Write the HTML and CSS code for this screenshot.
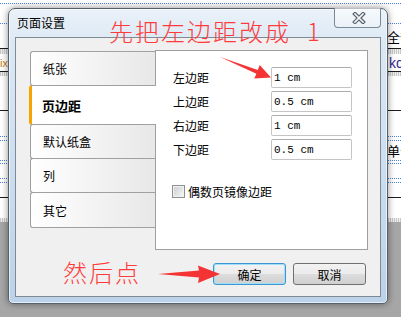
FILE: index.html
```html
<!DOCTYPE html>
<html lang="zh-CN">
<head>
  <meta charset="UTF-8">
  <title>页面设置</title>
  <link rel="stylesheet" href="styles.css">
</head>
<body>

  <div class="desk">
    <div class="sheet">
      <div class="row r1"></div>
      <div class="row r2"></div>
      <div class="row r3"><span class="cell">全部</span></div>
      <div class="row hatch h5"></div>
      <div class="row r5"><span class="cell-left">ix</span><span class="cell kd">kd</span></div>
      <div class="row hatch h4"></div>
      <div class="row r7"></div>
      <div class="row r8"></div>
      <div class="row r9"></div>
      <div class="row r10"><span class="cell">单击</span></div>
      <div class="row r11"></div>
      <div class="row r12"></div>
      <div class="row r13"></div>
      <div class="row r14"></div>
      <div class="row r15"></div>
      <div class="row hatch h4"></div>
    </div>
    <div class="floor"></div>
  </div>

  <div class="dialog">
    <div class="titlebar">
      <span class="title">页面设置</span>
      <span class="close">
        <svg width="14" height="12" viewBox="0 0 14 12">
          <path d="M3 2 L11 10 M11 2 L3 10" stroke="#5d6670" stroke-width="4" stroke-linecap="square" fill="none"/>
          <path d="M3 2 L11 10 M11 2 L3 10" stroke="#f4f6f8" stroke-width="1.6" stroke-linecap="square" fill="none"/>
        </svg>
      </span>
    </div>

    <div class="client">
      <div class="main">
        <div class="tabs">
          <div class="tab first">纸张</div>
          <div class="tab active">页边距</div>
          <div class="tab">默认纸盒</div>
          <div class="tab">列</div>
          <div class="tab last">其它</div>
        </div>

        <div class="panel">
          <div class="field"><span class="label">左边距</span><input type="text" value="1 cm"></div>
          <div class="field"><span class="label">上边距</span><input type="text" value="0.5 cm"></div>
          <div class="field"><span class="label">右边距</span><input type="text" value="1 cm"></div>
          <div class="field"><span class="label">下边距</span><input type="text" value="0.5 cm"></div>
          <div class="mirror"><span class="check"></span>偶数页镜像边距</div>
        </div>
      </div>

      <div class="buttons">
        <button class="btn default">确定</button>
        <button class="btn">取消</button>
      </div>
    </div>
  </div>

  <!-- red notes drawn over the screenshot -->
  <div class="note note-top">先把左边距改成<span class="one">1</span></div>
  <div class="note note-bottom">然后点</div>
  <svg class="arrows" width="401" height="317" viewBox="0 0 401 317">
    <polygon points="220,57 257.8,69.9 259.7,65 271,77.5 254.3,78.6 256.4,73.7" fill="#f43434"/>
    <polygon points="158,274 199,270.5 198,265.5 220,274 198,283 199,277.5" fill="#f43434"/>
  </svg>

</body>
</html>
```

FILE: styles.css
```css
body { margin: 0; width: 401px; height: 317px; overflow: hidden; position: relative; font-family: "Noto Sans CJK SC", sans-serif; font-size: 12px; color: #000; }

/* spreadsheet behind the dialog */
.desk { display: flex; flex-direction: column; height: 317px; }
.sheet { height: 222px; background: #fff; }
.floor { flex: 1; background: #a6a6a6; }
.row { box-sizing: border-box; border-bottom: 1px dotted #4a82de; display: flex; align-items: center; overflow: hidden; }
.row.hatch { border: none; background: repeating-linear-gradient(90deg, #c8c8c8 0 1px, #efefef 1px 2px); }
.h5 { height: 5px; }
.h4 { height: 4px; }
.r1 { height: 4px; }
.r2 { height: 20px; }
.r3 { height: 25px; border-bottom: 1px solid #1c1c1c; }
.r5 { height: 18px; border-bottom: 1px solid #1c1c1c; }
.r7 { height: 35px; border-bottom: 1px solid #1c1c1c; }
.r8 { height: 26px; }
.r9 { height: 4px; }
.r10 { height: 20px; }
.r11 { height: 3px; }
.r12 { height: 15px; }
.r13 { height: 4px; }
.r14 { height: 15px; border-bottom: 1px solid #1c1c1c; }
.r15 { height: 20px; border: none; }
.cell { margin-left: 387px; font-size: 13px; white-space: nowrap; }
.cell-left { position: absolute; left: 1px; font: 11px "Liberation Sans", sans-serif; color: #c87a14; }
.cell.kd { margin-left: 389px; color: #33288f; font-family: "Liberation Sans", sans-serif; font-size: 14px; }
.r5 .cell-left { position: static; width: 0; }

/* the window */
.dialog { position: absolute; left: 8px; top: 8px; width: 378px; height: 294px; border: 1px solid #56616c; border-radius: 7px 7px 5px 5px; background: linear-gradient(#eaf2f9 0%, #dbe8f4 12%, #cddff0 50%, #bcd2e8 100%); box-shadow: 0 0 7px rgba(0, 0, 0, 0.45), inset 0 0 0 1px rgba(255, 255, 255, 0.6); display: flex; flex-direction: column; }
.titlebar { height: 28px; display: flex; align-items: flex-start; }
.title { margin: 7px 0 0 8px; line-height: 14px; }
.close { margin: -1px 6px 0 auto; width: 45px; height: 19px; border: 1px solid #7b8896; border-top: none; border-radius: 0 0 4px 4px; background: linear-gradient(rgba(255, 255, 255, 0.6), rgba(255, 255, 255, 0.25)); display: flex; align-items: center; justify-content: center; }
.close svg { margin-left: 3px; }

.client { flex: 1; margin: 0 6px 6px; border: 1px solid #7f8a95; background: #f0f0f0; padding: 12px 12px 11px 14px; display: flex; flex-direction: column; }
.main { display: flex; height: 200px; }

.tabs { width: 125px; padding-top: 1px; display: flex; flex-direction: column; }
.tab { height: 33px; border: 1px solid #a0a0a0; border-right: none; border-radius: 3px 0 0 3px; background: linear-gradient(90deg, #fff, #e8e8e8); padding-left: 12px; display: flex; align-items: center; margin-top: -1px; }
.tab.first { margin-top: 0; }
.tab.last { height: 34px; }
.tab.active { position: relative; height: 38px; margin: -1px -1px 0 -1px; padding-left: 10px; background: #fff; border-left: 3px solid #f7a400; font-weight: bold; font-size: 13px; }

.panel { width: 213px; box-sizing: border-box; background: #fff; border: 1px solid #a0a0a0; padding: 16px 0 0 17px; }
.field { display: flex; align-items: center; height: 21px; margin-bottom: 3px; }
.label { width: 98px; }
.field input { width: 81px; height: 21px; box-sizing: border-box; margin: 0; border: 1px solid #c4c4c4; border-top-color: #adadad; border-radius: 2px; padding: 0 2px; font: 11px "Liberation Mono", monospace; color: #000; }
.mirror { display: flex; align-items: center; height: 13px; margin: 25px 0 0 -1px; }
.check { width: 13px; height: 13px; box-sizing: border-box; margin-right: 3px; border: 1px solid #8e8f8f; background: linear-gradient(135deg, #c9ccd1, #f8f8f8); box-shadow: inset 0 0 0 1px #f2f2f2; }

.buttons { display: flex; justify-content: flex-end; gap: 7px; margin-top: 13px; padding-right: 2px; }
.btn { width: 73px; height: 22px; padding: 0; border: 1px solid #707070; border-radius: 3px; background: linear-gradient(#f2f2f2 0%, #ebebeb 50%, #dddddd 51%, #cfcfcf 100%); font: 12px "Noto Sans CJK SC", sans-serif; color: #000; }
.btn.default { border-color: #3c95d0; box-shadow: inset 0 0 0 1px #9fe0f8; }

/* annotations */
.note { position: absolute; color: #ff3b3b; font: 300 24px/28px "Noto Sans CJK SC", sans-serif; letter-spacing: 2px; white-space: nowrap; }
.note-top { left: 109px; top: 17px; }
.note-bottom { left: 63px; top: 258px; }
.one { margin-left: 16px; }
.arrows { position: absolute; left: 0; top: 0; pointer-events: none; }
```
